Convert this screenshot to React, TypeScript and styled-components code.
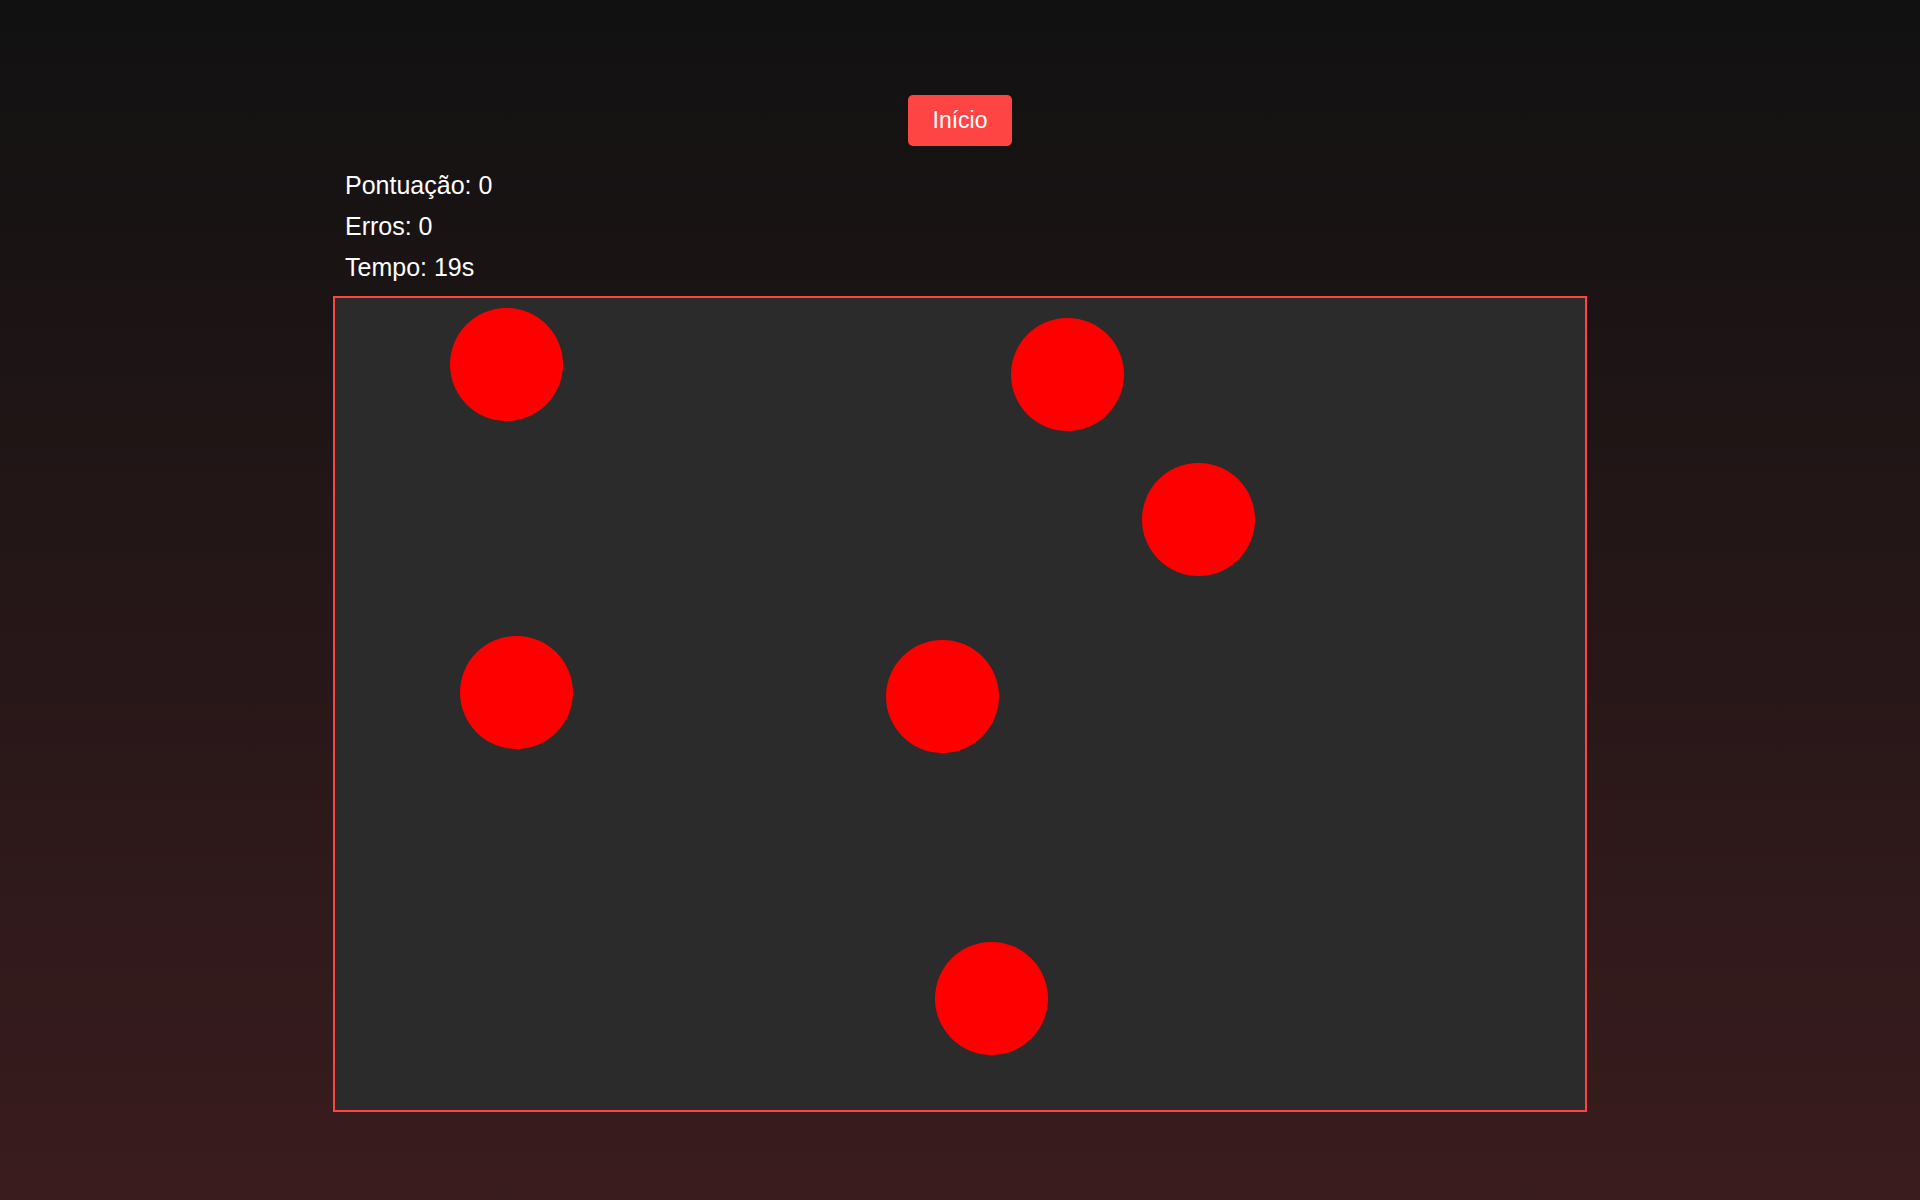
import styled, { createGlobalStyle } from 'styled-components'

const GlobalStyle = createGlobalStyle`
  html, body {
    margin: 0;
    padding: 0;
  }
  body {
    min-height: 100vh;
    background: linear-gradient(to bottom, #111111 0%, #3a1c1e 100%);
    font-family: "Liberation Sans", Arial, sans-serif;
    color: #ffffff;
  }
`

const Page = styled.div`
  min-height: 100vh;
  display: flex;
  flex-direction: column;
  align-items: center;
  padding-top: 95px;
  box-sizing: border-box;
`

const StartButton = styled.button`
  background: #ff4444;
  color: #ffffff;
  border: none;
  border-radius: 5px;
  padding: 12px 25px;
  font-family: "Liberation Sans", Arial, sans-serif;
  font-size: 23px;
  line-height: 27px;
  cursor: pointer;
`

const Column = styled.div`
  width: 1254px;
  display: flex;
  flex-direction: column;
`

const Stats = styled.div`
  display: flex;
  flex-direction: column;
  gap: 13px;
  padding-left: 12px;
  margin-top: 25px;
`

const StatLine = styled.div`
  font-size: 25px;
  line-height: 28px;
`

const Board = styled.div`
  position: relative;
  margin-top: 15px;
  width: 1250px;
  height: 812px;
  background: #2b2b2b;
  border: 2px solid #ff4444;
  overflow: hidden;
`

const Target = styled.div`
  position: absolute;
  width: 113px;
  height: 113px;
  border-radius: 50%;
  background: #ff0000;
  cursor: pointer;
`

const targets = [
  { x: 115, y: 10 },
  { x: 676, y: 20 },
  { x: 807, y: 165 },
  { x: 125, y: 338 },
  { x: 551, y: 342 },
  { x: 600, y: 644 },
]

const App = () => {
  return (
    <>
      <GlobalStyle />
      <Page>
        <StartButton>Início</StartButton>
        <Column>
          <Stats>
            <StatLine>Pontuação: 0</StatLine>
            <StatLine>Erros: 0</StatLine>
            <StatLine>Tempo: 19s</StatLine>
          </Stats>
          <Board>
            {targets.map((t, i) => (
              <Target key={i} style={{ left: t.x, top: t.y }} />
            ))}
          </Board>
        </Column>
      </Page>
    </>
  )
}

export default App
